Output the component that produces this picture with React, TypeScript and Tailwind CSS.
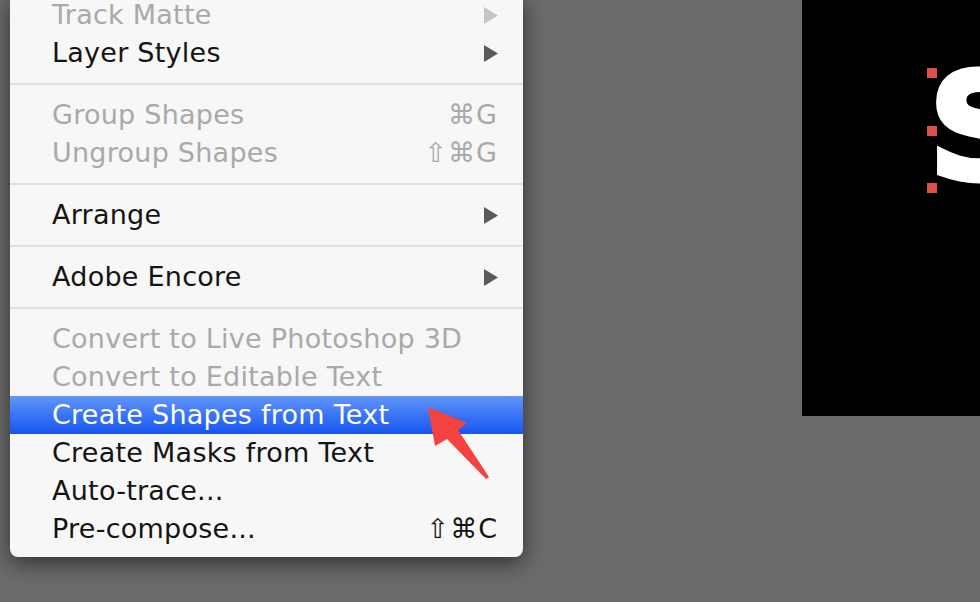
import React from "react";

type Item =
    | { kind: "sep" }
    | { kind: "item"; label: string; disabled?: boolean; submenu?: boolean; shortcut?: string; active?: boolean };

const items: Item[] = [
    { kind: "item", label: "Track Matte", disabled: true, submenu: true },
    { kind: "item", label: "Layer Styles", submenu: true },
    { kind: "sep" },
    { kind: "item", label: "Group Shapes", disabled: true, shortcut: "⌘G" },
    { kind: "item", label: "Ungroup Shapes", disabled: true, shortcut: "⇧⌘G" },
    { kind: "sep" },
    { kind: "item", label: "Arrange", submenu: true },
    { kind: "sep" },
    { kind: "item", label: "Adobe Encore", submenu: true },
    { kind: "sep" },
    { kind: "item", label: "Convert to Live Photoshop 3D", disabled: true },
    { kind: "item", label: "Convert to Editable Text", disabled: true },
    { kind: "item", label: "Create Shapes from Text", active: true },
    { kind: "item", label: "Create Masks from Text" },
    { kind: "item", label: "Auto-trace..." },
    { kind: "item", label: "Pre-compose...", shortcut: "⇧⌘C" },
];

function SubArrow({ disabled }: { disabled?: boolean }) {
    return (
        <svg width="14" height="17" viewBox="0 0 14 17" className={disabled ? "fill-[#c4c4c4]" : "fill-[#5a5a5a]"}>
            <path d="M0 0 L14 8.5 L0 17 Z" />
        </svg>
    );
}

function MenuRow({ item }: { item: Extract<Item, { kind: "item" }> }) {
    const color = item.active
        ? "text-white bg-gradient-to-b from-[#6395f8] via-[#3a74f5] to-[#1656ef]"
        : item.disabled
            ? "text-[#a9a9a9]"
            : "text-[#141414]";
    return (
        <div className={`flex items-center justify-between h-[38px] pl-[42px] pr-[25px] ${color}`}>
            <span>{item.label}</span>
            {item.submenu && <SubArrow disabled={item.disabled} />}
            {item.shortcut && <span className="tracking-[1px]">{item.shortcut}</span>}
        </div>
    );
}

export default function App() {
    return (
        <div className="flex w-full h-[602px] bg-[#6b6b6b] overflow-hidden relative font-['DejaVu_Sans',sans-serif]">
            {/* ---------------- context menu ---------------- */}
            <div className="ml-[10px] mt-[-4px] self-start w-[513px] bg-[#f7f7f7] rounded-b-[8px] pb-[9px] text-[27px] tracking-[0.25px] shadow-[0_6px_22px_rgba(0,0,0,0.55)]">
                {items.map((item, i) =>
                    item.kind === "sep" ? (
                        <div key={i} className="h-[24px] flex items-center">
                            <div className="w-full h-[2px] bg-[#e0e0e0]" />
                        </div>
                    ) : (
                        <MenuRow key={i} item={item} />
                    )
                )}
            </div>

            {/* ---------------- composition preview ---------------- */}
            <div className="ml-auto w-[178px] h-[416px] bg-black relative overflow-hidden">
                <span className="absolute left-[126px] top-[54px] text-white font-bold leading-none text-[148px] font-['DejaVu_Sans',sans-serif] [-webkit-text-stroke:5px_white]">
                    S
                </span>
                <div className="absolute left-[125px] top-[68px] w-[10px] h-[10px] bg-[#d9534c]" />
                <div className="absolute left-[125px] top-[126px] w-[10px] h-[10px] bg-[#d9534c]" />
                <div className="absolute left-[125px] top-[183px] w-[10px] h-[10px] bg-[#d9534c]" />
            </div>

            {/* annotation arrow */}
            <svg className="absolute left-0 top-0 pointer-events-none" width="980" height="602" viewBox="0 0 980 602">
                <polygon
                    points="428,407 467,423 458,430 489,477 486,479 447,439 435,446"
                    fill="#f4433f"
                />
            </svg>
        </div>
    );
}
